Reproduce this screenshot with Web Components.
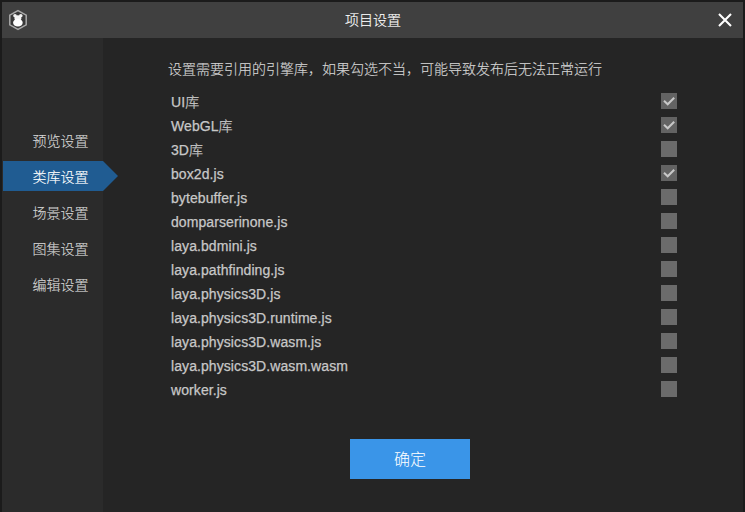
<!DOCTYPE html>
<html lang="zh-CN">
<head>
<meta charset="utf-8">
<title>项目设置</title>
<style>
  html, body { margin: 0; height: 100%; background: #1b1b1b; overflow: hidden; }
  body { font: 300 14px/20px "Liberation Sans", "Noto Sans CJK SC", sans-serif; color: #c8c8c8; }
</style>
</head>
<body>
<settings-dialog>
  <title-bar slot="title">项目设置</title-bar>
  <nav-item slot="nav">预览设置</nav-item>
  <nav-item slot="nav" active>类库设置</nav-item>
  <nav-item slot="nav">场景设置</nav-item>
  <nav-item slot="nav">图集设置</nav-item>
  <nav-item slot="nav">编辑设置</nav-item>
  <span slot="hint">设置需要引用的引擎库，如果勾选不当，可能导致发布后无法正常运行</span>
  <lib-row checked>UI库</lib-row>
  <lib-row checked>WebGL库</lib-row>
  <lib-row>3D库</lib-row>
  <lib-row checked>box2d.js</lib-row>
  <lib-row>bytebuffer.js</lib-row>
  <lib-row>domparserinone.js</lib-row>
  <lib-row>laya.bdmini.js</lib-row>
  <lib-row>laya.pathfinding.js</lib-row>
  <lib-row>laya.physics3D.js</lib-row>
  <lib-row>laya.physics3D.runtime.js</lib-row>
  <lib-row>laya.physics3D.wasm.js</lib-row>
  <lib-row>laya.physics3D.wasm.wasm</lib-row>
  <lib-row>worker.js</lib-row>
  <confirm-button slot="action">确定</confirm-button>
</settings-dialog>
<script>
  function define(name, markup) {
    const template = document.createElement('template');
    template.innerHTML = markup;
    customElements.define(name, class extends HTMLElement {
      constructor() {
        super();
        this.attachShadow({ mode: 'open' }).append(template.content.cloneNode(true));
      }
    });
  }

  define('title-bar', `
    <style>
      :host { display: grid; grid-template-columns: 33px 1fr 32px; align-items: center; height: 36px; background: #404040; color: #fff; }
      .name { text-align: center; -webkit-text-stroke: 0.15px currentColor; }
      svg { display: block; }
      .logo { margin-left: 6px; }
      .close { margin-left: 6px; }
    </style>
    <svg class="logo" width="20" height="22" viewBox="0 0 20 22">
      <path d="M10 1.6 18.2 6.2V15.8L10 20.4 1.8 15.8V6.2Z" fill="#393939" stroke="#aaa" stroke-width="1.5"/>
      <circle cx="7" cy="6.8" r="1.8" fill="#f2f2f2"/><circle cx="12.8" cy="6.8" r="1.8" fill="#f2f2f2"/>
      <ellipse cx="9.9" cy="9.2" rx="3.4" ry="2.9" fill="#f5f5f5"/>
      <ellipse cx="9.9" cy="13.7" rx="4.8" ry="3.8" fill="#fff"/>
    </svg>
    <div class="name"><slot></slot></div>
    <svg class="close" width="16" height="16" viewBox="0 0 16 16"><path d="M2 2 14 14M14 2 2 14" stroke="#fff" stroke-width="2.1"/></svg>
  `);

  define('nav-item', `
    <style>
      :host { display: flex; width: 115px; height: 30px; align-items: center; box-sizing: border-box; padding: 2px 0 0 29.5px; color: #d4d4d4; -webkit-text-stroke: 0.15px currentColor; }
      :host([active]) { background: #205c92; color: #fff; clip-path: polygon(0 0, 100px 0, 115px 50%, 100px 100%, 0 100%); }
    </style>
    <slot></slot>
  `);

  define('lib-row', `
    <style>
      :host { display: flex; justify-content: space-between; align-items: center; height: 24px; }
      .label { letter-spacing: 0.08px; -webkit-text-stroke: 0.25px currentColor; }
      .box { width: 16px; height: 16px; background: #6b6b6b; margin-bottom: 2px; }
      svg { display: none; }
      :host([checked]) svg { display: block; }
      :host([checked]) .box { background: #636363; }
    </style>
    <span class="label"><slot></slot></span>
    <div class="box"><svg width="16" height="16" viewBox="0 0 16 16"><path d="M3 7.7 6.7 11.3 13.2 4.8" fill="none" stroke="#c8c8c8" stroke-width="2"/></svg></div>
  `);

  define('confirm-button', `
    <style>
      :host { display: flex; width: 120px; height: 40px; box-sizing: border-box; padding-top: 2px; align-items: center; justify-content: center; background: #3a95e8; color: #fff; font-size: 16px; }
    </style>
    <slot></slot>
  `);

  define('settings-dialog', `
    <style>
      :host { display: flex; flex-direction: column; box-sizing: border-box; height: 512px; padding: 2px 2px 0; }
      .body { display: flex; flex: 1; background: #252525; }
      nav { display: flex; flex-direction: column; gap: 6px; box-sizing: border-box; width: 101px; padding: 87px 0 0 1px; background: #2b2b2b; }
      main { flex: 1; padding: 21px 67px 0 65px; }
      ::slotted([slot="hint"]) { color: #d4d4d4; -webkit-text-stroke: 0.15px currentColor; }
      .list { width: 506px; margin: 11px 0 0 3px; }
      .action { margin: 37px 0 0 182px; }
    </style>
    <slot name="title"></slot>
    <div class="body">
      <nav><slot name="nav"></slot></nav>
      <main>
        <slot name="hint"></slot>
        <div class="list"><slot></slot></div>
        <div class="action"><slot name="action"></slot></div>
      </main>
    </div>
  `);
</script>
</body>
</html>
